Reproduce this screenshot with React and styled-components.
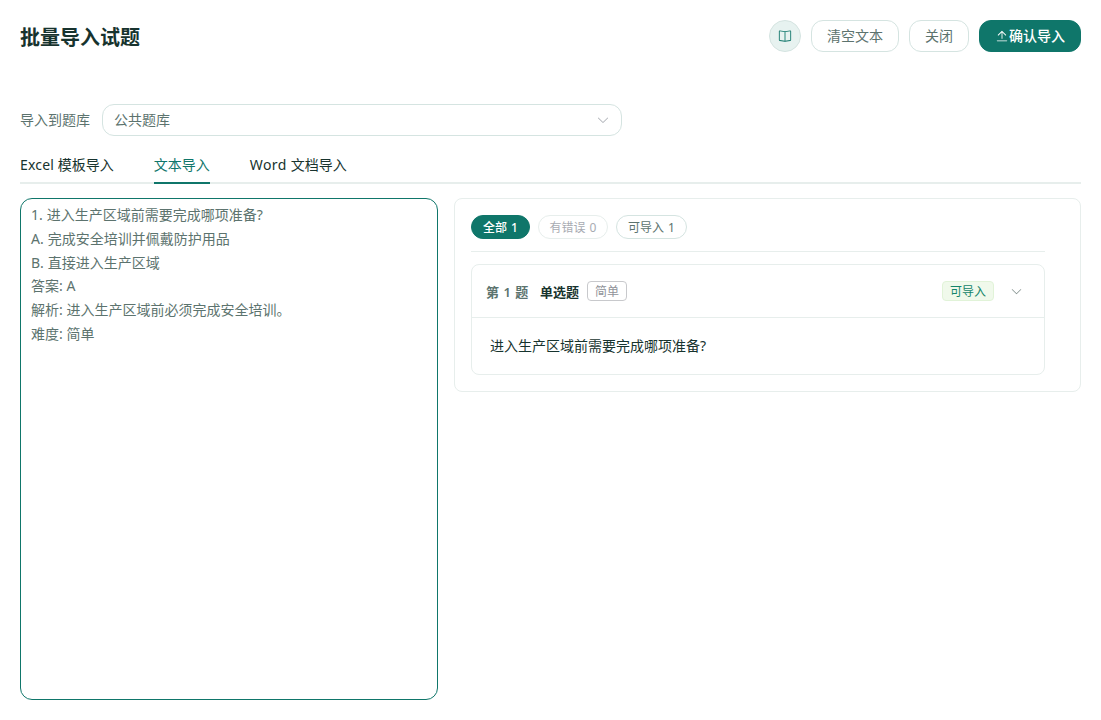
import React from "react";
import styled, { createGlobalStyle, css } from "styled-components";

const GlobalStyle = createGlobalStyle`
  * { box-sizing: border-box; }
  body {
    margin: 0;
    background: #fff;
    color: #17332e;
    font-family: "Noto Sans", "Noto Sans CJK SC", sans-serif;
    font-size: 14px;
  }
  button { font-family: inherit; }
`;

const Page = styled.main`
  display: flex;
  flex-direction: column;
  height: 720px;
  padding: 20px;
`;

const Header = styled.header`
  display: flex;
  align-items: center;
  justify-content: space-between;
  height: 32px;
`;

const Title = styled.h1`
  margin: 0;
  padding-top: 4px;
  font-size: 20px;
  line-height: 32px;
  font-weight: 700;
  color: #17332e;
`;

const Actions = styled.div`
  display: flex;
  gap: 10px;
`;

const Button = styled.button`
  display: inline-flex;
  align-items: center;
  justify-content: center;
  height: 32px;
  padding: 0 15px;
  border: 1px solid #d5e4e1;
  border-radius: 12px;
  background: #fff;
  color: #5c736e;
  font-size: 14px;
  line-height: 14px;
  white-space: nowrap;
  ${(p) =>
    p.$variant === "primary" &&
    css`
      border-color: #0f766a;
      background: #0f766a;
      color: #fff;
      font-weight: 500;
    `}
  ${(p) =>
    p.$variant === "circle" &&
    css`
      width: 32px;
      padding: 0;
      border-radius: 50%;
      background: #e7f2f0;
      color: #0f766a;
    `}
`;

const Icon = styled.svg`
  display: block;
  flex: none;
  width: 14px;
  height: 14px;
  fill: currentColor;
`;

const BankRow = styled.div`
  display: flex;
  align-items: center;
  gap: 12px;
  height: 32px;
  margin-top: 52px;
  color: #5c736e;
`;

const FieldText = styled.span`
  padding-bottom: 2px;
`;

const Select = styled.div`
  display: flex;
  align-items: center;
  justify-content: space-between;
  width: 520px;
  height: 32px;
  padding: 0 11px;
  border: 1px solid #d5e4e1;
  border-radius: 12px;
  color: #5c736e;
  ${Icon} { color: #a8abb2; }
`;

const Tabs = styled.nav`
  display: flex;
  gap: 40px;
  height: 40px;
  margin-top: 8px;
  box-shadow: inset 0 -2px #e7eeec;
`;

const Tab = styled.div`
  height: 40px;
  line-height: 42px;
  color: ${(p) => (p.$active ? "#0f766a" : "#17332e")};
  border-bottom: 2px solid ${(p) => (p.$active ? "#0f766a" : "transparent")};
`;

const Latin = styled.span`
  letter-spacing: ${(p) => p.$tracking || "0.1px"};
`;

const Workspace = styled.div`
  display: grid;
  grid-template-columns: 418px 1fr;
  align-items: start;
  gap: 16px;
  flex: 1;
  margin-top: 14px;
`;

const Editor = styled.div`
  height: 502px;
  padding: 4px 10px;
  border: 1px solid #0f766a;
  border-radius: 12px;
  color: #5c736e;
  line-height: 23.8px;
`;

const EditorLine = styled.div`
  height: 23.8px;
  white-space: nowrap;
`;

const Preview = styled.section`
  height: 194px;
  padding: 16px 35px 16px 16px;
  border: 1px solid #e7eeec;
  border-radius: 8px;
`;

const Filters = styled.div`
  display: flex;
  gap: 8px;
  height: 37px;
  border-bottom: 1px solid #e7eeec;
`;

const Pill = styled.button`
  width: ${(p) => p.$width}px;
  height: 24px;
  padding: 1px 0 0;
  border: 1px solid ${(p) => (p.$active ? "#0f766a" : p.disabled ? "#e7eeec" : "#d5e4e1")};
  border-radius: 12px;
  background: ${(p) => (p.$active ? "#0f766a" : "#fff")};
  color: ${(p) => (p.$active ? "#fff" : p.disabled ? "#a8abb2" : "#5c736e")};
  font-size: 12px;
  font-weight: ${(p) => (p.$active ? 500 : 400)};
  line-height: 21px;
  word-spacing: 1px;
  white-space: nowrap;
`;

const Card = styled.article`
  height: 111px;
  margin-top: 12px;
  border: 1px solid #e7eeec;
  border-radius: 8px;
`;

const CardHeader = styled.div`
  display: flex;
  align-items: center;
  height: 53px;
  padding: 0 21px 0 14px;
  border-bottom: 1px solid #e7eeec;
`;

const Number = styled.span`
  width: 54px;
  font-size: 13px;
  font-weight: 600;
  color: #5c736e;
  word-spacing: 1px;
  white-space: nowrap;
`;

const Kind = styled.strong`
  margin-right: 8px;
  font-size: 13px;
  font-weight: 600;
  color: #17332e;
`;

const Tag = styled.span`
  height: 20px;
  padding: 0 7px;
  border: 1px solid ${(p) => (p.$success ? "#e1f3d8" : "#c8c9cc")};
  border-radius: 4px;
  background: ${(p) => (p.$success ? "#f0f9eb" : "#fff")};
  color: ${(p) => (p.$success ? "#15856a" : "#909399")};
  font-size: 12px;
  line-height: 20px;
`;

const Status = styled.div`
  display: flex;
  align-items: center;
  gap: 16px;
  margin-left: auto;
  ${Icon} { width: 13px; height: 13px; color: #82908d; }
`;

const Stem = styled.p`
  margin: 0;
  padding: 17px 18px;
  line-height: 22px;
  color: #17332e;
`;

const BookIcon = () => (
  <Icon viewBox="0 0 1024 1024">
    <path d="m512 863.36 384-54.848v-638.72L525.568 222.72a96 96 0 0 1-27.136 0L128 169.792v638.72zM137.024 106.432l370.432 52.928a32 32 0 0 0 9.088 0l370.432-52.928A64 64 0 0 1 960 169.792v638.72a64 64 0 0 1-54.976 63.36l-388.48 55.488a32 32 0 0 1-9.088 0l-388.48-55.488A64 64 0 0 1 64 808.512v-638.72a64 64 0 0 1 73.024-63.36z" />
    <path d="M480 192h64v704h-64z" />
  </Icon>
);

const UploadIcon = () => (
  <Icon viewBox="0 0 1024 1024">
    <path d="M160 832h704a32 32 0 1 1 0 64H160a32 32 0 1 1 0-64m384-578.304V704h-64V247.296L237.248 490.048 192 444.8 508.8 128l316.8 316.8-45.312 45.248z" />
  </Icon>
);

const ChevronIcon = () => (
  <Icon viewBox="0 0 1024 1024">
    <path d="M831.872 340.864 512 652.672 192.128 340.864a30.592 30.592 0 0 0-42.752 0 29.12 29.12 0 0 0 0 41.6L489.664 714.24a32 32 0 0 0 44.672 0l340.288-331.712a29.12 29.12 0 0 0 0-41.728 30.592 30.592 0 0 0-42.752 0z" />
  </Icon>
);

const lines = [
  ["1. ", "进入生产区域前需要完成哪项准备?"],
  ["A. ", "完成安全培训并佩戴防护用品"],
  ["B. ", "直接进入生产区域"],
  ["", "答案: A"],
  ["", "解析: 进入生产区域前必须完成安全培训。"],
  ["", "难度: 简单"],
];

export default function App() {
  return (
    <>
      <GlobalStyle />
      <Page lang="zh-CN">
        <Header>
          <Title>批量导入试题</Title>
          <Actions>
            <Button $variant="circle"><BookIcon /></Button>
            <Button>清空文本</Button>
            <Button>关闭</Button>
            <Button $variant="primary"><UploadIcon />确认导入</Button>
          </Actions>
        </Header>
        <BankRow>
          <FieldText>导入到题库</FieldText>
          <Select><FieldText>公共题库</FieldText><ChevronIcon /></Select>
        </BankRow>
        <Tabs>
          <Tab><Latin $tracking="0.18px">Excel </Latin>模板导入</Tab>
          <Tab $active>文本导入</Tab>
          <Tab><Latin $tracking="0.4px">Word </Latin>文档导入</Tab>
        </Tabs>
        <Workspace>
          <Editor>
            {lines.map(([mark, text]) => (
              <EditorLine key={text}><Latin>{mark}</Latin>{text}</EditorLine>
            ))}
          </Editor>
          <Preview>
            <Filters>
              <Pill $width={59} $active>全部 1</Pill>
              <Pill $width={70} disabled>有错误 0</Pill>
              <Pill $width={71}>可导入 1</Pill>
            </Filters>
            <Card>
              <CardHeader>
                <Number>第 1 题</Number>
                <Kind>单选题</Kind>
                <Tag>简单</Tag>
                <Status>
                  <Tag $success>可导入</Tag>
                  <ChevronIcon />
                </Status>
              </CardHeader>
              <Stem>进入生产区域前需要完成哪项准备?</Stem>
            </Card>
          </Preview>
        </Workspace>
      </Page>
    </>
  );
}
